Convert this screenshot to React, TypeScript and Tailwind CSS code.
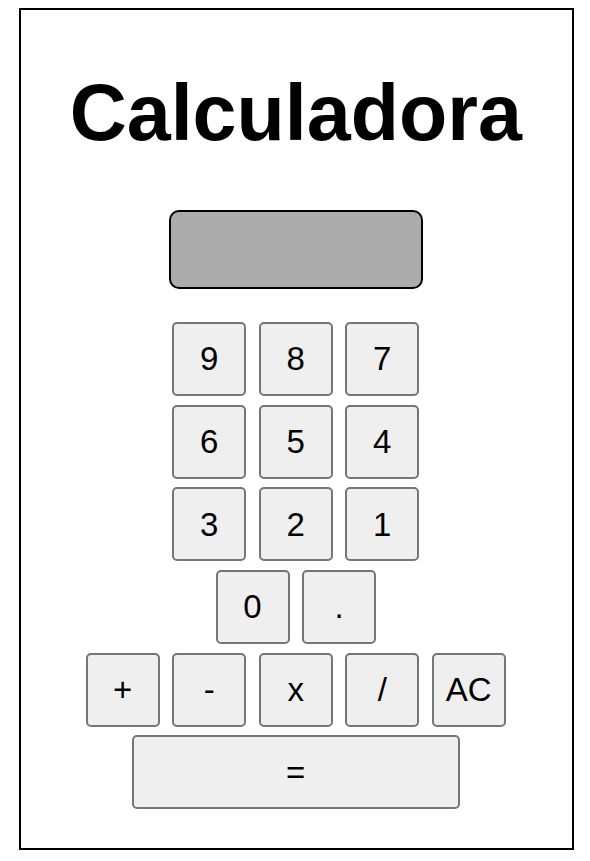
export default function App() {
  const rows = [
    ["9", "8", "7"],
    ["6", "5", "4"],
    ["3", "2", "1"],
    ["0", "."],
    ["+", "-", "x", "/", "AC"],
  ];

  return (
    <div className="min-h-screen bg-white font-['Liberation_Sans',Arial,sans-serif] text-black">
      <div className="ml-[19px] mt-[8px] flex h-[842px] w-[555px] flex-col items-center border-2 border-black pr-[1.5px] pt-[57px]">
        <h1 className="text-[79px] font-bold leading-[91px]">Calculadora</h1>

        <div className="mt-[52px] h-[79px] w-[254px] rounded-[10px] border-2 border-black bg-[#adacad]" />

        <div className="mt-[33px] flex flex-col items-center gap-[8.7px]">
          {rows.map((row, i) => (
            <div key={i} className="flex gap-[12.5px]">
              {row.map((k) => (
                <button
                  key={k}
                  className="flex size-[74px] items-center justify-center rounded-[5px] border-2 border-[#767676] bg-[#efefef] text-[33px]"
                >
                  {k}
                </button>
              ))}
            </div>
          ))}
          <button className="flex h-[74px] w-[328px] items-center justify-center rounded-[5px] border-2 border-[#767676] bg-[#efefef] text-[33px]">
            =
          </button>
        </div>
      </div>
    </div>
  );
}
